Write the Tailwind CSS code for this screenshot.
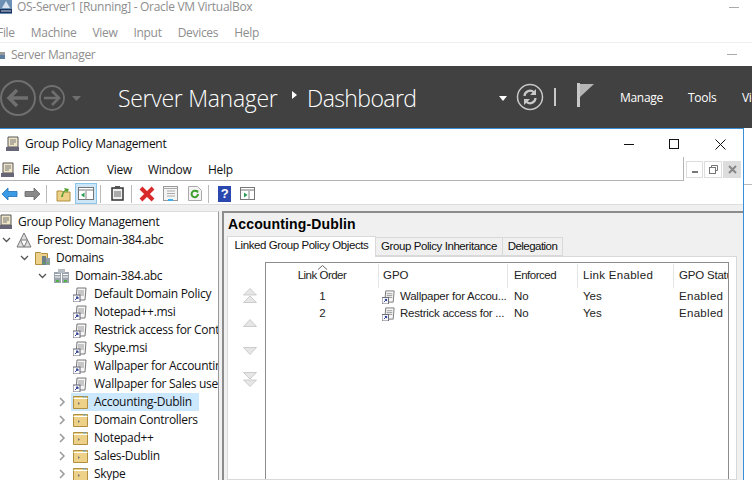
<!DOCTYPE html>
<html>
<head>
<meta charset="utf-8">
<script src="https://cdn.jsdelivr.net/npm/@tailwindcss/browser@4"></script>
</head>
<body class="m-0 bg-white">
<div class="w-[752px] h-[480px] overflow-hidden bg-white flex flex-col font-['Open_Sans','Noto_Sans',sans-serif] text-[12px] tracking-[-0.3px] text-[#111] whitespace-nowrap">

  <!-- VirtualBox title -->
  <div class="h-[14px] flex items-center shrink-0 text-[#8e8e8e]">
    <svg width="12" height="14" viewBox="0 0 12 14" class="shrink-0"><rect width="12" height="14" fill="#6d8fb3"/><rect x="0" y="9" width="12" height="4" fill="#1b3560"/><path d="M2 8 L6 1 L10 8Z" fill="#d7e2ee"/><path d="M1 11h10" stroke="#fff" stroke-width=".8"/></svg>
    <span class="ml-[5px]">OS-Server1 [Running] - Oracle VM VirtualBox</span>
    <div class="ml-auto mr-[13px] w-[10px] h-px bg-[#aaa]"></div>
  </div>
  <!-- VirtualBox menu -->
  <div class="h-[29px] pt-[9px] flex items-center gap-[16px] shrink-0 border-b border-[#eee] text-[#8e8e8e] -ml-[3px]">
    <span>File</span><span>Machine</span><span>View</span><span>Input</span><span>Devices</span><span>Help</span>
  </div>
  <!-- SM title -->
  <div class="h-[23px] flex items-center shrink-0 text-[#8e8e8e]">
    <svg width="6" height="10" viewBox="0 0 6 10" class="shrink-0"><rect x="0" y="2" width="5" height="3" fill="#999"/><rect x="0" y="5" width="5" height="4" fill="#5c7f9f"/></svg>
    <span class="ml-[5px]">Server Manager</span>
    <div class="ml-auto mr-[15px] w-[10px] h-px bg-[#aaa]"></div>
  </div>
  <!-- Dark bar -->
  <div class="h-[62px] bg-[#414141] flex items-center shrink-0 text-white">
    <svg width="82" height="40" viewBox="0 0 82 40" class="shrink-0 mt-[2px]" fill="none" stroke="#6f6f6f">
      <circle cx="18" cy="20" r="17" stroke-width="2"/>
      <path d="M28 20H10M17 12l-8 8 8 8" stroke-width="3.5"/>
      <circle cx="52" cy="20" r="12" stroke-width="1.8"/>
      <path d="M44 20h15M52 13l7 7-7 7" stroke-width="2.6"/>
      <path d="M72 18h9l-4.500 5z" fill="#6f6f6f" stroke="none"/>
    </svg>
    <span class="ml-[36px] w-[160px] shrink-0 text-[23px] font-light tracking-[-0.3px] mt-[2px]">Server Manager</span>
    <svg width="8" height="10" viewBox="0 0 8 10" class="ml-[13px] shrink-0 mt-[-4px]"><path d="M1 1l5 4-5 4z" fill="#fff"/></svg>
    <span class="ml-[8px] w-[109px] shrink-0 text-[23px] font-light tracking-[-0.6px] mt-[2px]">Dashboard</span>
    <svg width="8" height="5" viewBox="0 0 8 5" class="ml-[83px] shrink-0 mt-[2px]"><path d="M0 0h8l-4 5z" fill="#fff"/></svg>
    <svg width="28" height="28" viewBox="0 0 28 28" fill="none" stroke="#c8c8c8" class="ml-[9px] shrink-0">
      <circle cx="14" cy="14" r="12.500" stroke-width="1.500"/>
      <path d="M8.500 13a5.500 5.500 0 0 1 9.500-3.500M19.500 15a5.500 5.500 0 0 1-9.500 3.500" stroke-width="2.200"/>
      <path d="M20 6v6h-6zM8 22v-6h6z" fill="#c8c8c8" stroke="none"/>
    </svg>
    <div class="ml-[10px] w-[2px] h-[18px] bg-[#c8c8c8] shrink-0"></div>
    <svg width="18" height="24" viewBox="0 0 18 24" class="ml-[21px] shrink-0 mt-[-4px]"><rect width="3" height="24" fill="#c8c8c8"/><path d="M3 1h14L3 14z" fill="#b5b5b5"/></svg>
    <span class="ml-[25px] w-[43px] shrink-0 font-medium mt-[2px]">Manage</span>
    <span class="ml-[25px] w-[28px] shrink-0 font-medium mt-[2px]">Tools</span>
    <span class="ml-[26px] shrink-0 font-medium mt-[2px]">View</span>
  </div>

  <div class="flex-1 min-h-0 flex">
  <!-- GPM window -->
  <div class="w-[744px] shrink-0 flex flex-col border-t border-r border-[#3a8fd8] bg-white">
    <div class="h-[28px] pt-[2px] flex items-center shrink-0">
      <svg width="16" height="16" viewBox="0 0 16 16" class="ml-[5px] shrink-0"><path d="M3 1h10v10H3z" fill="#efe6c8" stroke="#555"/><path d="M5 4h6M5 6h6M5 8h4" stroke="#777"/><rect x="1" y="11" width="13" height="4" fill="#667"/></svg>
      <span class="ml-[4px]">Group Policy Management</span>
      <svg width="11" height="11" viewBox="0 0 11 11" class="ml-auto shrink-0" fill="none" stroke="#111"><path d="M0 5.500h10"/></svg>
      <svg width="11" height="11" viewBox="0 0 11 11" class="ml-[34px] shrink-0" fill="none" stroke="#111"><rect x=".5" y=".5" width="9" height="9"/></svg>
      <svg width="11" height="11" viewBox="0 0 11 11" class="ml-[35px] mr-[17px] shrink-0" fill="none" stroke="#111"><path d="M.5.500l10 10M10.500.500l-10 10"/></svg>
    </div>
    <div class="h-[24px] flex items-center shrink-0">
      <div class="flex-1 h-full flex items-center pt-[3px] border-b border-r border-[#b4b4b4]">
        <svg width="16" height="16" viewBox="0 0 16 16" class="shrink-0"><path d="M3 1h10v10H3z" fill="#efe6c8" stroke="#555"/><path d="M5 4h6M5 6h6M5 8h4" stroke="#777"/><rect x="1" y="11" width="13" height="4" fill="#667"/></svg>
        <span class="ml-[6px] w-[18px]">File</span><span class="ml-[16px] w-[35px]">Action</span><span class="ml-[16px] w-[25px]">View</span><span class="ml-[16px] w-[44px]">Window</span><span class="ml-[16px]">Help</span>
      </div>
      <div class="w-[59px] h-full flex items-start pt-[4px] pl-[2px] gap-px shrink-0">
        <div class="w-[17px] h-[17px] border border-[#ddd] flex items-center justify-center"><div class="w-[6px] h-[2px] bg-[#777] mt-[5px]"></div></div>
        <div class="w-[18px] h-[17px] border border-[#ddd] flex items-center justify-center"><svg width="9" height="9" viewBox="0 0 9 9" fill="none" stroke="#777"><path d="M2.500 2.500V.5h6v5H6.500"/><rect x=".5" y="2.500" width="6" height="6"/></svg></div>
        <div class="w-[18px] h-[17px] bg-[#ddd] flex items-center justify-center"><svg width="9" height="9" viewBox="0 0 9 9" stroke="#888" stroke-width="2"><path d="M1 1l7 7M8 1L1 8"/></svg></div>
      </div>
    </div>
    <!-- toolbar -->
    <div class="h-[24px] pt-[2px] flex items-center shrink-0 border-b border-[#ddd] pl-px">
      <svg width="17" height="14" viewBox="0 0 17 14" class="shrink-0"><path d="M7 1L1 7l6 6V9.500h9v-5H7z" fill="#3b9be5" stroke="#1e6fb8" stroke-width=".8"/></svg>
      <svg width="17" height="14" viewBox="0 0 17 14" class="ml-[6px] shrink-0"><path d="M10 1l6 6-6 6V9.500H1v-5h9z" fill="#8a8a8a" stroke="#666" stroke-width=".8"/></svg>
      <div class="ml-[5px] w-px h-[18px] bg-[#bbb] shrink-0"></div>
      <svg width="16" height="16" viewBox="0 0 16 16" class="ml-[9px] shrink-0"><path d="M1 5h5l1 1h7v9H1z" fill="#edd189" stroke="#b08f3e"/><path d="M5 11C6 7 7 5 9 4L8 2l5 1-2 4-1-2c-2 1-3 3-3 6z" fill="#58a02e"/></svg>
      <div class="ml-[3px] w-[22px] h-[21px] bg-[#cde6f7] border border-[#8cc4ea] flex items-center justify-center shrink-0"><svg width="16" height="13" viewBox="0 0 16 13"><rect x=".5" y=".5" width="15" height="12" fill="#fff" stroke="#777"/><path d="M0 3h16" stroke="#777"/><path d="M8 4v9" stroke="#888"/><path d="M6.500 5.500v5L3 8z" fill="#2a9d55"/></svg></div>
      <div class="ml-[3px] w-px h-[18px] bg-[#bbb] shrink-0"></div>
      <svg width="13" height="15" viewBox="0 0 13 15" class="ml-[10px] shrink-0"><rect x="1" y="2" width="11" height="12" fill="#eee" stroke="#333" stroke-width="1.500"/><path d="M3 6h7M3 8h7M3 10h7" stroke="#666"/><rect x="4" y="0" width="5" height="3" fill="#555"/></svg>
      <div class="ml-[7px] w-px h-[18px] bg-[#bbb] shrink-0"></div>
      <svg width="16" height="16" viewBox="0 0 16 16" class="ml-[7px] shrink-0"><path d="M2 2l12 12M14 2L2 14" stroke="#d82a2a" stroke-width="4"/></svg>
      <svg width="15" height="15" viewBox="0 0 15 15" class="ml-[8px] shrink-0"><rect x=".5" y=".5" width="14" height="14" fill="#f4f4f4" stroke="#999"/><path d="M0 2.500h15" stroke="#aaa"/><path d="M4 5h8M4 7.500h8M4 10h8" stroke="#aaa"/><rect x="5" y="13" width="5" height="2" fill="#3bb0e8"/></svg>
      <svg width="14" height="15" viewBox="0 0 14 15" class="ml-[10px] shrink-0"><path d="M.5.500h9l4 4v10H.5z" fill="#f4f4f4" stroke="#aaa"/><path d="M10 8a3.200 3.200 0 1 1-1-2.300" fill="none" stroke="#3da02c" stroke-width="2"/><path d="M7.500 4l3 .5-.5 3z" fill="#3da02c"/></svg>
      <div class="ml-[6px] w-px h-[18px] bg-[#bbb] shrink-0"></div>
      <div class="ml-[9px] w-[13px] h-[16px] bg-[#2a48b0] text-white text-[13px] font-bold flex items-center justify-center font-['Liberation_Sans'] shrink-0">?</div>
      <svg width="15" height="13" viewBox="0 0 15 13" class="ml-[9px] shrink-0"><rect x=".5" y=".5" width="14" height="12" fill="#fff" stroke="#777"/><path d="M0 3h15" stroke="#777"/><path d="M9 4v9" stroke="#888"/><path d="M4 5.500v5l3.500-2.500z" fill="#2a9d55"/></svg>
    </div>
    <!-- body -->
    <div class="flex-1 min-h-0 bg-[#f0f0f0] flex pt-[6px]">
      <!-- tree -->
      <div class="w-[219px] shrink-0 border-r border-[#999] bg-white border-t border-t-[#ddd] overflow-hidden flex flex-col pt-px">
        <div class="h-[18px] flex items-center"><svg width="16" height="16" viewBox="0 0 16 16" class="shrink-0 -ml-[2px]"><path d="M3 1h10v10H3z" fill="#efe6c8" stroke="#555"/><path d="M5 4h6M5 6h6M5 8h4" stroke="#777"/><rect x="1" y="11" width="13" height="4" fill="#667"/></svg><span class="ml-[4px]">Group Policy Management</span></div>
        <div class="h-[18px] flex items-center pl-[2px]"><svg width="9" height="6" viewBox="0 0 9 6" fill="none" stroke="#555" stroke-width="1.300" class="shrink-0"><path d="M1 1l3.500 3.500L8 1"/></svg><svg width="16" height="16" viewBox="0 0 16 16" class="ml-[5px] shrink-0"><path d="M8 1L1 15h14z" fill="#ddd" stroke="#777"/><path d="M8 15L4.500 8h7z" fill="#fff" stroke="#777"/></svg><span class="ml-[5px]">Forest: Domain-384.abc</span></div>
        <div class="h-[18px] flex items-center pl-[20px]"><svg width="9" height="6" viewBox="0 0 9 6" fill="none" stroke="#555" stroke-width="1.300" class="shrink-0"><path d="M1 1l3.500 3.500L8 1"/></svg><svg width="16" height="16" viewBox="0 0 16 16" class="ml-[6px] shrink-0"><path d="M.5 2.500h5l1 1h6v11H.5z" fill="#edd189" stroke="#b08f3e"/><rect x="7" y="6" width="4" height="9" fill="#6f7f88"/><rect x="11" y="8" width="4" height="7" fill="#8f9ca3"/><path d="M8 13h2M12 13h2" stroke="#4fb342"/></svg><span class="ml-[5px]">Domains</span></div>
        <div class="h-[18px] flex items-center pl-[38px]"><svg width="9" height="6" viewBox="0 0 9 6" fill="none" stroke="#555" stroke-width="1.300" class="shrink-0"><path d="M1 1l3.500 3.500L8 1"/></svg><svg width="16" height="16" viewBox="0 0 16 16" class="ml-[7px] shrink-0"><rect x="0" y="4" width="7" height="11" fill="#9aa3ab"/><rect x="8" y="4" width="7" height="11" fill="#9aa3ab"/><rect x="4" y="1" width="7" height="4" fill="#b5bcc2"/><path d="M1 6.500h5M1 9h5M9 6.500h5M9 9h5" stroke="#fff"/><rect x="2" y="12" width="3" height="2" fill="#4fb342"/><rect x="10" y="12" width="3" height="2" fill="#4fb342"/></svg><span class="ml-[5px]">Domain-384.abc</span></div>
        <div class="h-[18px] flex items-center pl-[73px]"><svg width="15" height="15" viewBox="0 0 15 15" class="shrink-0"><path d="M4 1h9l-1 12H3z" fill="#f5f5f5" stroke="#777"/><path d="M5 4h6M5 6h6M5 8h6" stroke="#999"/><rect x="0" y="8" width="7" height="7" fill="#fff" stroke="#667"/><path d="M2 13l3-3M3 10h2v2" stroke="#2a3fa0"/></svg><span class="ml-[6px]">Default Domain Policy</span></div>
        <div class="h-[18px] flex items-center pl-[73px]"><svg width="15" height="15" viewBox="0 0 15 15" class="shrink-0"><path d="M4 1h9l-1 12H3z" fill="#f5f5f5" stroke="#777"/><path d="M5 4h6M5 6h6M5 8h6" stroke="#999"/><rect x="0" y="8" width="7" height="7" fill="#fff" stroke="#667"/><path d="M2 13l3-3M3 10h2v2" stroke="#2a3fa0"/></svg><span class="ml-[6px]">Notepad++.msi</span></div>
        <div class="h-[18px] flex items-center pl-[73px]"><svg width="15" height="15" viewBox="0 0 15 15" class="shrink-0"><path d="M4 1h9l-1 12H3z" fill="#f5f5f5" stroke="#777"/><path d="M5 4h6M5 6h6M5 8h6" stroke="#999"/><rect x="0" y="8" width="7" height="7" fill="#fff" stroke="#667"/><path d="M2 13l3-3M3 10h2v2" stroke="#2a3fa0"/></svg><span class="ml-[6px]">Restrick access for Contractor</span></div>
        <div class="h-[18px] flex items-center pl-[73px]"><svg width="15" height="15" viewBox="0 0 15 15" class="shrink-0"><path d="M4 1h9l-1 12H3z" fill="#f5f5f5" stroke="#777"/><path d="M5 4h6M5 6h6M5 8h6" stroke="#999"/><rect x="0" y="8" width="7" height="7" fill="#fff" stroke="#667"/><path d="M2 13l3-3M3 10h2v2" stroke="#2a3fa0"/></svg><span class="ml-[6px]">Skype.msi</span></div>
        <div class="h-[18px] flex items-center pl-[73px]"><svg width="15" height="15" viewBox="0 0 15 15" class="shrink-0"><path d="M4 1h9l-1 12H3z" fill="#f5f5f5" stroke="#777"/><path d="M5 4h6M5 6h6M5 8h6" stroke="#999"/><rect x="0" y="8" width="7" height="7" fill="#fff" stroke="#667"/><path d="M2 13l3-3M3 10h2v2" stroke="#2a3fa0"/></svg><span class="ml-[6px]">Wallpaper for Accounting</span></div>
        <div class="h-[18px] flex items-center pl-[73px]"><svg width="15" height="15" viewBox="0 0 15 15" class="shrink-0"><path d="M4 1h9l-1 12H3z" fill="#f5f5f5" stroke="#777"/><path d="M5 4h6M5 6h6M5 8h6" stroke="#999"/><rect x="0" y="8" width="7" height="7" fill="#fff" stroke="#667"/><path d="M2 13l3-3M3 10h2v2" stroke="#2a3fa0"/></svg><span class="ml-[6px]">Wallpaper for Sales users</span></div>
        <div class="h-[18px] flex items-center pl-[59px]"><svg width="7" height="10" viewBox="0 0 7 10" fill="none" stroke="#999" stroke-width="1.500" class="shrink-0"><path d="M1 1l4 4-4 4"/></svg><div class="ml-[5px] flex items-center h-full bg-[#cce8ff] w-[128px]"><svg width="15" height="14" viewBox="0 0 15 14" class="ml-[2px] shrink-0"><path d="M.5 1.500h14v12H.5z" fill="#edd189" stroke="#b08f3e"/><path d="M.5 3.500h14" stroke="#fff"/><path d="M10 1.500h3v1h-3z" fill="#5aa9e0"/><path d="M5 7l2 1.500L5 10z" fill="#777"/></svg><span class="ml-[6px]">Accounting-Dublin</span></div></div>
        <div class="h-[18px] flex items-center pl-[59px]"><svg width="7" height="10" viewBox="0 0 7 10" fill="none" stroke="#999" stroke-width="1.500" class="shrink-0"><path d="M1 1l4 4-4 4"/></svg><svg width="15" height="14" viewBox="0 0 15 14" class="ml-[7px] shrink-0"><path d="M.5 1.500h14v12H.5z" fill="#edd189" stroke="#b08f3e"/><path d="M.5 3.500h14" stroke="#fff"/><path d="M10 1.500h3v1h-3z" fill="#5aa9e0"/><path d="M5 7l2 1.500L5 10z" fill="#777"/></svg><span class="ml-[6px]">Domain Controllers</span></div>
        <div class="h-[18px] flex items-center pl-[59px]"><svg width="7" height="10" viewBox="0 0 7 10" fill="none" stroke="#999" stroke-width="1.500" class="shrink-0"><path d="M1 1l4 4-4 4"/></svg><svg width="15" height="14" viewBox="0 0 15 14" class="ml-[7px] shrink-0"><path d="M.5 1.500h14v12H.5z" fill="#edd189" stroke="#b08f3e"/><path d="M.5 3.500h14" stroke="#fff"/><path d="M10 1.500h3v1h-3z" fill="#5aa9e0"/><path d="M5 7l2 1.500L5 10z" fill="#777"/></svg><span class="ml-[6px]">Notepad++</span></div>
        <div class="h-[18px] flex items-center pl-[59px]"><svg width="7" height="10" viewBox="0 0 7 10" fill="none" stroke="#999" stroke-width="1.500" class="shrink-0"><path d="M1 1l4 4-4 4"/></svg><svg width="15" height="14" viewBox="0 0 15 14" class="ml-[7px] shrink-0"><path d="M.5 1.500h14v12H.5z" fill="#edd189" stroke="#b08f3e"/><path d="M.5 3.500h14" stroke="#fff"/><path d="M10 1.500h3v1h-3z" fill="#5aa9e0"/><path d="M5 7l2 1.500L5 10z" fill="#777"/></svg><span class="ml-[6px]">Sales-Dublin</span></div>
        <div class="h-[18px] flex items-center pl-[59px]"><svg width="7" height="10" viewBox="0 0 7 10" fill="none" stroke="#999" stroke-width="1.500" class="shrink-0"><path d="M1 1l4 4-4 4"/></svg><svg width="15" height="14" viewBox="0 0 15 14" class="ml-[7px] shrink-0"><path d="M.5 1.500h14v12H.5z" fill="#edd189" stroke="#b08f3e"/><path d="M.5 3.500h14" stroke="#fff"/><path d="M10 1.500h3v1h-3z" fill="#5aa9e0"/><path d="M5 7l2 1.500L5 10z" fill="#777"/></svg><span class="ml-[6px]">Skype</span></div>
      </div>
      <!-- right -->
      <div class="ml-[3px] flex-1 min-w-0 border-t-2 border-l-2 border-[#8c8c8c] flex flex-col">
        <div class="h-[23px] pl-[4px] flex items-center font-bold text-[14px] tracking-[0.15px] font-['Liberation_Sans'] text-black shrink-0">Accounting-Dublin</div>
        <div class="h-[20px] flex items-end shrink-0 pl-[3px] text-[#111] text-[11.500px] font-['Liberation_Sans'] tracking-[-0.42px] relative z-10">
          <div class="h-[21px] w-[149px] bg-white border border-[#d9d9d9] border-b-0 flex items-center justify-center -mb-px pb-[3px]">Linked Group Policy Objects</div>
          <div class="h-[19px] w-[127px] border border-[#d9d9d9] border-l-0 flex items-center justify-center">Group Policy Inheritance</div>
          <div class="h-[19px] w-[60px] border border-[#d9d9d9] border-l-0 flex items-center justify-center tracking-[-0.55px]">Delegation</div>
        </div>
        <div class="flex-1 ml-[3px] mr-[6px] bg-white border border-[#d9d9d9] min-h-0 flex pt-[5px] pl-[6px] pr-[7px] font-['Liberation_Sans'] tracking-normal text-[11.500px]">
          <div class="w-[31px] shrink-0 flex flex-col items-center pt-[26px]">
            <svg width="14" height="15" viewBox="0 0 14 15" class="shrink-0"><path d="M7 .5l6.500 6.500H.5zM7 8l6.500 6.500H.5z" fill="#e6e6e6" stroke="#bbb" stroke-width=".7"/></svg>
            <svg width="14" height="8" viewBox="0 0 14 8" class="mt-[16px] shrink-0"><path d="M7 .5l6.500 7H.5z" fill="#e6e6e6" stroke="#bbb" stroke-width=".7"/></svg>
            <svg width="14" height="8" viewBox="0 0 14 8" class="mt-[20px] shrink-0"><path d="M7 7.500l6.500-7H.5z" fill="#e6e6e6" stroke="#bbb" stroke-width=".7"/></svg>
            <svg width="14" height="15" viewBox="0 0 14 15" class="mt-[17px] shrink-0"><path d="M7 7l6.500-6.500H.5zM7 14.500L13.500 8H.5z" fill="#e6e6e6" stroke="#bbb" stroke-width=".7"/></svg>
          </div>
          <div class="flex-1 min-w-0 border-t border-l border-r border-[#8c8c8c] overflow-hidden flex flex-col">
            <div class="h-[25px] shrink-0 grid grid-cols-[113px_129px_70px_96px_1fr] items-center text-[#222]">
              <div class="h-[24px] flex items-center justify-center border-r border-[#e5e5e5] relative tracking-[-0.5px]"><svg width="9" height="5" viewBox="0 0 9 5" fill="none" stroke="#666" class="absolute top-px left-[52px]"><path d="M0 4.500L4.500.500 9 4.500"/></svg>Link Order</div>
              <div class="h-[24px] flex items-center pl-[4px] border-r border-[#e5e5e5]">GPO</div>
              <div class="h-[24px] flex items-center pl-[6px] border-r border-[#e5e5e5] tracking-[-0.5px]">Enforced</div>
              <div class="h-[24px] flex items-center pl-[5px] border-r border-[#e5e5e5] tracking-[0.3px]">Link Enabled</div>
              <div class="h-[24px] flex items-center pl-[5px] overflow-hidden tracking-[-0.2px]">GPO Status</div>
            </div>
            <div class="h-[17px] shrink-0 grid grid-cols-[113px_129px_70px_96px_1fr] items-center text-[#222]">
              <div class="text-center">1</div>
              <div class="flex items-center pl-[3px] overflow-hidden"><svg width="14" height="14" viewBox="0 0 15 15" class="shrink-0"><path d="M4 1h9l-1 12H3z" fill="#f5f5f5" stroke="#777"/><path d="M5 4h6M5 6h6M5 8h6" stroke="#999"/><rect x="0" y="8" width="7" height="7" fill="#fff" stroke="#667"/><path d="M2 13l3-3M3 10h2v2" stroke="#2a3fa0"/></svg><span class="ml-[4px] tracking-[-0.25px]">Wallpaper for Accou...</span></div>
              <div class="pl-[6px]">No</div><div class="pl-[5px]">Yes</div><div class="pl-[5px] tracking-[0.3px]">Enabled</div>
            </div>
            <div class="h-[17px] shrink-0 grid grid-cols-[113px_129px_70px_96px_1fr] items-center text-[#222]">
              <div class="text-center">2</div>
              <div class="flex items-center pl-[3px] overflow-hidden"><svg width="14" height="14" viewBox="0 0 15 15" class="shrink-0"><path d="M4 1h9l-1 12H3z" fill="#f5f5f5" stroke="#777"/><path d="M5 4h6M5 6h6M5 8h6" stroke="#999"/><rect x="0" y="8" width="7" height="7" fill="#fff" stroke="#667"/><path d="M2 13l3-3M3 10h2v2" stroke="#2a3fa0"/></svg><span class="ml-[4px] tracking-[-0.25px]">Restrick access for ...</span></div>
              <div class="pl-[6px]">No</div><div class="pl-[5px]">Yes</div><div class="pl-[5px] tracking-[0.3px]">Enabled</div>
            </div>
          </div>
        </div>
      </div>
    </div>
  </div>
  <div class="flex-1 pt-[56px]"><div class="h-px bg-[#bbb]"></div></div>
  </div>
</div>
</body>
</html>
